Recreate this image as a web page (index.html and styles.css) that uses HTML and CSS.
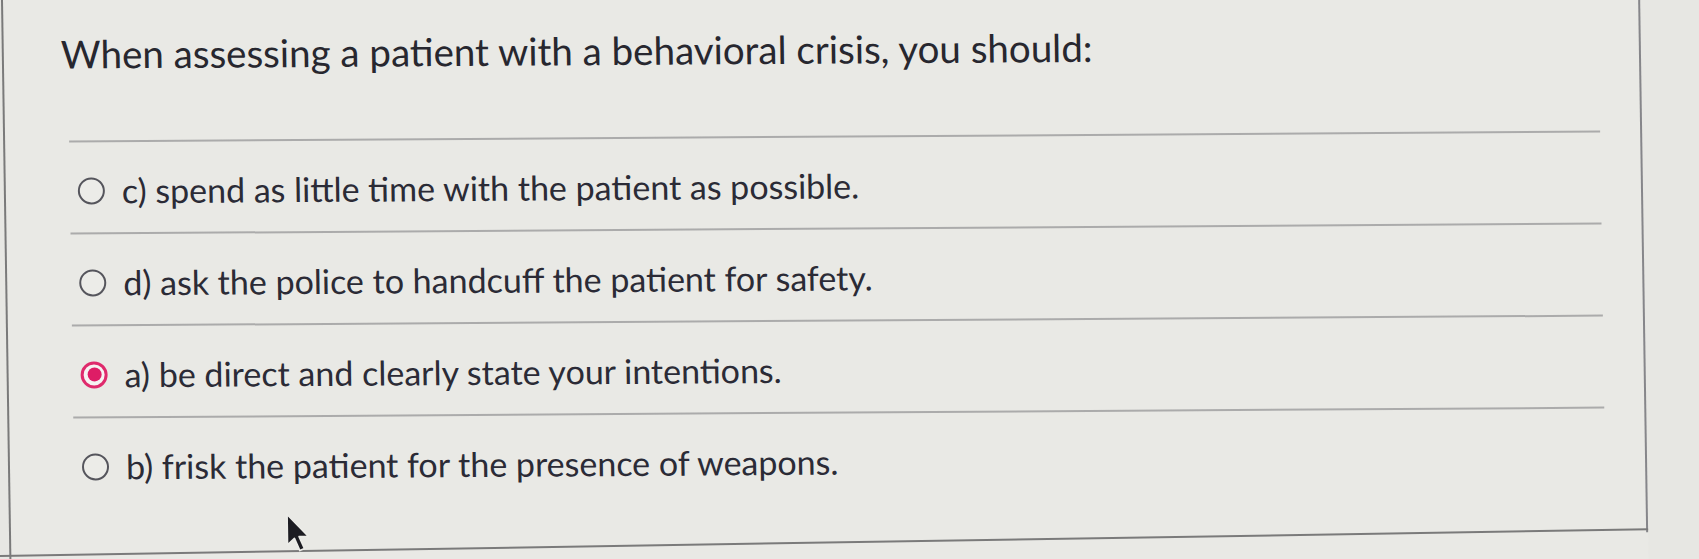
FILE: index.html
```html
<!DOCTYPE html>
<html lang="en">
<head>
<meta charset="utf-8">
<title>Quiz question</title>
<link rel="stylesheet" href="styles.css">
</head>
<body>
<div class="card">
  <p class="question">When assessing a patient with a behavioral crisis, you should:</p>
  <div class="options">
    <label class="option">
      <span class="radio"></span>
      <span class="label-text">c) spend as little time with the patient as possible.</span>
    </label>
    <label class="option">
      <span class="radio"></span>
      <span class="label-text">d) ask the police to handcuff the patient for safety.</span>
    </label>
    <label class="option">
      <span class="radio radio-checked"><span class="dot"></span></span>
      <span class="label-text">a) be direct and clearly state your intentions.</span>
    </label>
    <label class="option">
      <span class="radio"></span>
      <span class="label-text">b) frisk the patient for the presence of weapons.</span>
    </label>
  </div>
  <svg class="cursor" width="28" height="42" viewBox="0 0 24 36">
    <path d="M2 2 L2 28 L8 22.5 L12.5 33 L16.5 31.3 L12 21 L20 21 Z" fill="#1c1c22" stroke="#ecece8" stroke-width="1.4" stroke-linejoin="round"/>
  </svg>
</div>
</body>
</html>
```
FILE: styles.css
```css
html, body {
  margin: 0;
  padding: 0;
  background: #e7e7e3;
  height: 100%;
  overflow: hidden;
}

body {
  font-family: Lato, "Open Sans", sans-serif;
  color: #2b2b33;
}

.card {
  position: relative;
  margin-left: 1px;
  width: 1639px;
  height: 580px;
  border-left: 2px solid #7a7a7a;
  box-sizing: border-box;
  transform: matrix(1, -0.0065, 0.015, 1, 0, 0);
  transform-origin: 0 0;
  background: #e9e9e5;
}

.card::before {
  content: "";
  position: absolute;
  right: 0;
  top: -20px;
  width: 2px;
  height: 563px;
  background: #86868a;
}

.card::after {
  content: "";
  position: absolute;
  right: 0;
  top: 539px;
  width: 1680px;
  height: 2px;
  background: #7a7a7a;
  transform: rotate(-0.55deg);
  transform-origin: 100% 0;
}

.question {
  margin: 0;
  padding: 31px 0 0 57px;
  font-size: 38.5px;
  line-height: 46px;
  font-weight: 400;
  color: #27272f;
}

.options {
  margin: 64px 0 0 64px;
  width: 1531px;
}

.option {
  display: flex;
  align-items: center;
  gap: 17px;
  box-sizing: border-box;
  padding: 29px 0 23px 8px;
  border-top: 2px solid #ababab;
}

.radio {
  width: 27px;
  height: 27px;
  border: 2px solid #55555c;
  border-radius: 50%;
  box-sizing: border-box;
  display: flex;
  align-items: center;
  justify-content: center;
  flex-shrink: 0;
  background: #ecece8;
}

.radio-checked {
  border: 3px solid #df2a6c;
  background: #f6f2f2;
}

.dot {
  width: 14px;
  height: 14px;
  border-radius: 50%;
  background: #de1d66;
}

.label-text {
  font-size: 34px;
  line-height: 38px;
  color: #2b2b36;
}

.cursor {
  position: absolute;
  z-index: 2;
  left: 274px;
  top: 514px;
}
```
